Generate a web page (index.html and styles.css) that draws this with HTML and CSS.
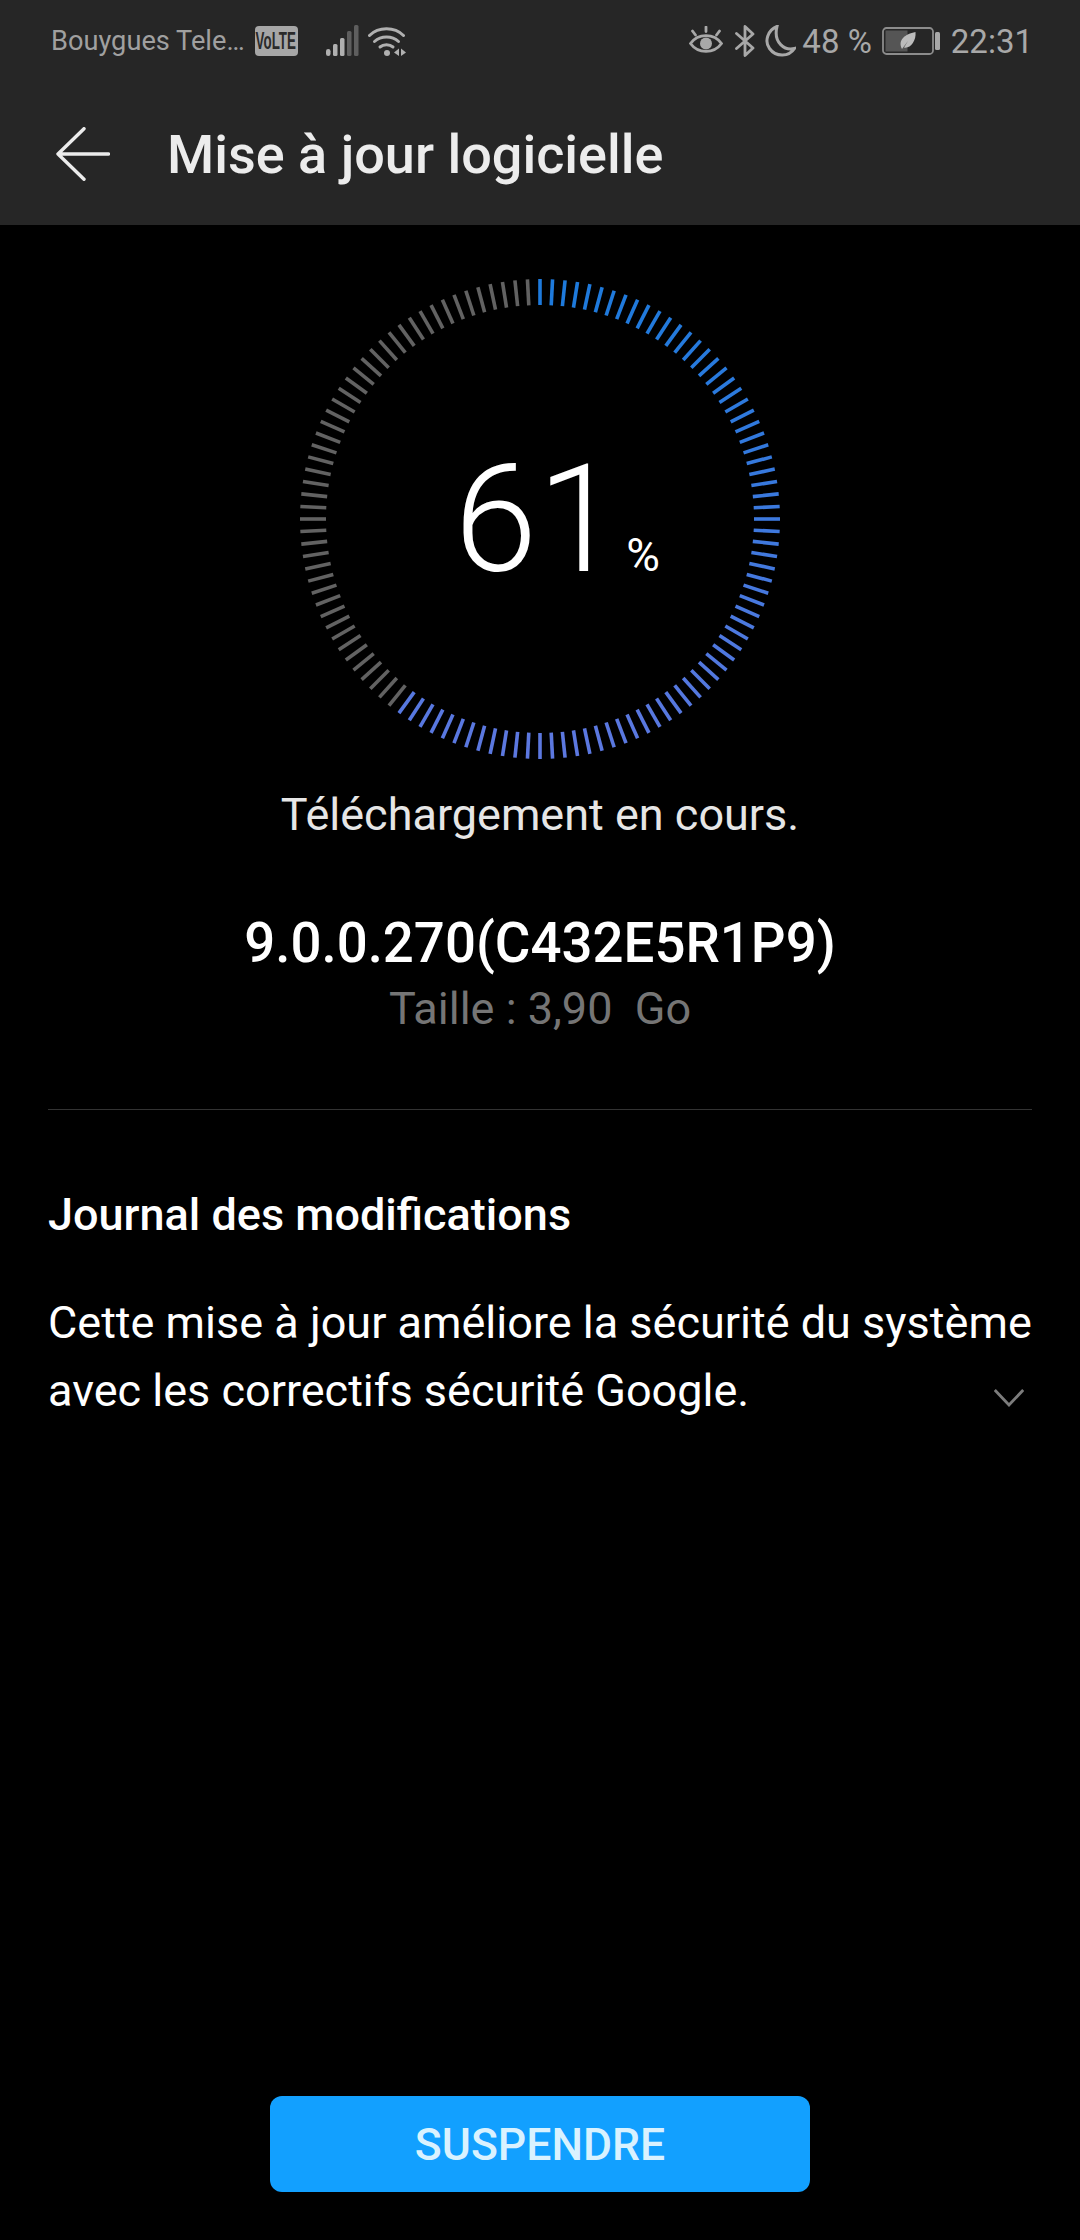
FILE: index.html
```html
<!DOCTYPE html>
<html lang="fr">
<head>
<meta charset="utf-8">
<title>Mise à jour logicielle</title>
<link rel="stylesheet" href="styles.css">
</head>
<body>
<div class="screen">
  <header class="top">
    <div class="status">
      <div class="status-left">
        <span class="carrier">Bouygues Tele…</span>
        <span class="volte"><span class="volte-text">VoLTE</span></span>
        <svg class="i-signal" width="33" height="32" viewBox="0 0 33 32">
          <rect x="0" y="24" width="4.500" height="7" rx="2.200" fill="#b0b0b0"/>
          <rect x="7" y="19" width="4.500" height="12" rx="1.500" fill="#b0b0b0"/>
          <rect x="14" y="13" width="4.500" height="18" rx="1.500" fill="#b0b0b0"/>
          <rect x="21" y="6" width="4.500" height="25" rx="1.500" fill="#5e5e5e"/>
          <rect x="28" y="0" width="4.500" height="31" rx="1.500" fill="#5e5e5e"/>
        </svg>
        <svg class="i-wifi" width="38" height="30" viewBox="0 0 38 30" fill="none" stroke="#b0b0b0" stroke-width="3" stroke-linecap="round">
          <path d="M1.500 9.500C10.500 0.500 26.500 0.500 35.500 9.500"/>
          <path d="M6.500 15.500C13 9.500 24 9.500 30.500 15.500"/>
          <path d="M12 21C15.500 18 21.500 18 25 21"/>
          <circle cx="19" cy="27" r="3" fill="#b0b0b0" stroke="none"/>
          <path d="M31 22.500V30L26 26.500Z" fill="#b0b0b0" stroke="none"/>
          <path d="M33 22.500V30L38 26.500Z" fill="#b0b0b0" stroke="none"/>
        </svg>
      </div>
      <div class="status-right">
        <svg class="i-eye" width="34" height="30" viewBox="0 0 34 30" fill="none" stroke="#a8a8a8" stroke-width="2.800" stroke-linecap="round">
          <path d="M1.500 17.500C9 7 25 7 32.500 17.500C25 28 9 28 1.500 17.500Z"/>
          <circle cx="17" cy="17.500" r="6" fill="#a8a8a8" stroke="none"/>
          <path d="M17 1V5.500M3.500 5L6.500 9M30.500 5L27.500 9"/>
        </svg>
        <svg class="i-bt" width="20" height="32" viewBox="0 0 20 32" fill="none" stroke="#a8a8a8" stroke-width="2.800" stroke-linecap="round" stroke-linejoin="round">
          <path d="M1.500 8.500L18 23L10 30.500V1.500L18 9L1.500 23.500"/>
        </svg>
        <svg class="i-moon" width="31" height="32" viewBox="0 0 31 32" fill="none" stroke="#a8a8a8" stroke-width="3">
          <path d="M12 1.500C3 5 -1 16 4.500 23.500C11 32.500 24 32 29.500 23.500C20 26 8 18 12 1.500Z"/>
        </svg>
        <span class="batt-pct">48 %</span>
        <svg class="i-batt" width="58" height="28" viewBox="0 0 58 28">
          <rect x="1" y="1" width="50" height="26" rx="3.500" fill="none" stroke="#8c8c8c" stroke-width="1.800"/>
          <rect x="3.500" y="3.500" width="22" height="21" fill="#555"/>
          <rect x="53" y="5" width="5" height="18" rx="1.500" fill="#a8a8a8"/>
          <path d="M20 22C15.500 13 23 7 33.500 5C34.500 14 28 22 22 20.500L26 14L20 22Z" fill="#bcbcbc"/>
        </svg>
        <span class="clock">22:31</span>
      </div>
    </div>
    <div class="appbar">
      <svg class="back" width="54" height="54" viewBox="0 0 54 54" fill="none" stroke="#ececec" stroke-width="3.400" stroke-linecap="round" stroke-linejoin="round">
        <path d="M28 1.700L2 27L28 52.300M2 27H52.500"/>
      </svg>
      <h1 class="title">Mise à jour logicielle</h1>
    </div>
  </header>

  <main class="content">
    <section class="progress">
      <div class="ring">
        <svg id="ring-svg" width="480" height="480" viewBox="-240 -240 480 480"></svg>
        <div class="ring-value"><span class="num">61</span><span class="pct">%</span></div>
      </div>
      <p class="state">Téléchargement en cours.</p>
      <p class="version">9.0.0.270(C432E5R1P9)</p>
      <p class="size">Taille : 3,90&nbsp; Go</p>
    </section>
    <hr class="divider">
    <section class="log">
      <h2 class="log-title">Journal des modifications</h2>
      <div class="log-body">
        <p class="log-text">Cette mise à jour améliore la sécurité du système<br>avec les correctifs sécurité Google.</p>
        <svg class="chevron" width="30" height="18" viewBox="0 0 30 18" fill="none" stroke="#7c7c7c" stroke-width="2.800">
          <path d="M0.800 1L15 16L29.200 1"/>
        </svg>
      </div>
    </section>
    <div class="actions">
      <button class="primary">SUSPENDRE</button>
    </div>
  </main>
</div>
<script src="ring.js"></script>
</body>
</html>
```
FILE: styles.css
```css
* { box-sizing: border-box; }
html, body { margin: 0; padding: 0; background: #000; }
body { font-family: Roboto, "Noto Sans", sans-serif; }
p, h1, h2 { margin: 0; font-weight: 400; }

.screen { width: 1080px; height: 2240px; display: flex; flex-direction: column; overflow: hidden; }

.top { height: 225px; background: #262626; flex: none; }
.status { height: 82px; padding: 0 47px 0 51px; display: flex; justify-content: space-between; align-items: center; color: #a8a8a8; }
.status-left, .status-right { display: flex; align-items: center; }
.carrier { font-size: 27.2px; color: #a0a0a0; }
.volte { margin-left: 10px; width: 43px; height: 30px; border-radius: 4px; background: #a6a6a6; display: flex; justify-content: center; overflow: hidden; }
.volte-text { color: #2a2a2a; font: 700 23px/30px "Liberation Sans", sans-serif; transform: scaleX(.58); flex: none; }
.i-signal { margin-left: 28px; }
.i-wifi { margin-left: 9px; }
.i-bt { margin-left: 12px; }
.i-moon { margin-left: 10px; }
.batt-pct { margin-left: 6px; font-size: 33px; }
.i-batt { margin-left: 10px; }
.clock { margin-left: 11px; font-size: 33px; }

.appbar { height: 143px; padding-left: 56px; display: flex; align-items: center; }
.back { flex: none; }
.title { margin-left: 57px; font-size: 54px; font-weight: 500; color: #ececec; position: relative; top: 1px; }

.content { flex: 1; padding: 0 48px; display: flex; flex-direction: column; color: #fff; }
.progress { display: flex; flex-direction: column; align-items: center; padding-top: 54px; }
.ring { position: relative; width: 480px; height: 480px; }
#ring-svg { display: block; }
.ring-value { position: absolute; top: 166px; left: 0; width: 100%; padding-left: 34px; display: flex; justify-content: center; align-items: baseline; line-height: 1; }
.num { font-size: 150px; font-weight: 300; line-height: 150px; }
.pct { font-size: 46px; font-weight: 400; margin-left: 6px; }
.state { padding-top: 24px; font-size: 45px; line-height: 64px; color: #e6e6e6; }
.version { margin-top: 64px; font-size: 54.6px; line-height: 64px; font-weight: 500; }
.size { margin-top: 2px; font-size: 45px; line-height: 64px; color: #757575; }

.divider { margin: 68px 0 0; border: 0; height: 1px; background: #333; flex: none; }

.log-title { margin-top: 77px; font-size: 45px; line-height: 56px; font-weight: 500; }
.log-body { margin-top: 46px; position: relative; }
.log-text { font-size: 45px; line-height: 68px; }
.chevron { position: absolute; right: 8px; bottom: 18px; }

.actions { margin-top: auto; padding-bottom: 48px; display: flex; justify-content: center; }
.primary { width: 540px; height: 96px; border: 0; border-radius: 12px; background: #12a0ff; color: #d9f2ff; font: 500 44.5px Roboto, sans-serif; padding: 2px 0 0; }
```
FILE: ring.js
```js
var svg = document.getElementById('ring-svg');
var NS = 'http://www.w3.org/2000/svg';
for (var i = 0; i < 120; i++) {
  var a = i * 3 * Math.PI / 180;
  var s = Math.sin(a), c = -Math.cos(a);
  var line = document.createElementNS(NS, 'line');
  line.setAttribute('x1', 214 * s);
  line.setAttribute('y1', 214 * c);
  line.setAttribute('x2', 240 * s);
  line.setAttribute('y2', 240 * c);
  line.setAttribute('stroke-width', '3.6');
  if (i <= 72) {
    var t = (1 - Math.cos(a)) / 2;
    var r = Math.round(30 + (92 - 30) * t);
    var g = Math.round(122 + (120 - 122) * t);
    var b = Math.round(220 + (224 - 220) * t);
    line.setAttribute('stroke', 'rgb(' + r + ',' + g + ',' + b + ')');
  } else {
    line.setAttribute('stroke', '#626262');
  }
  svg.appendChild(line);
}
```
